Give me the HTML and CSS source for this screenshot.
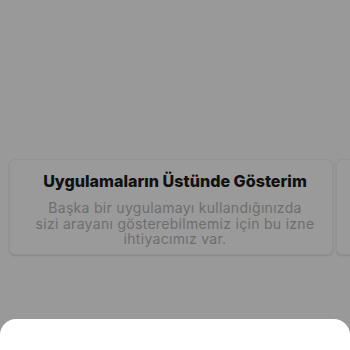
FILE: index.html
```html
<!DOCTYPE html>
<html>
<head>
<meta charset="utf-8">
<link rel="stylesheet" href="styles.css">
</head>
<body>
<div class="screen">
  <div class="carousel">
    <div class="card">
      <div class="title">Uygulamaların Üstünde Gösterim</div>
      <div class="desc">Başka bir uygulamayı kullandığınızda<br>sizi arayanı gösterebilmemiz için bu izne ihtiyacımız var.</div>
    </div>
    <div class="card next"></div>
  </div>
  <div class="sheet"></div>
</div>
</body>
</html>
```
FILE: styles.css
```css
html, body {
  margin: 0;
  padding: 0;
  background: #999999;
}
.screen {
  width: 350px;
  height: 350px;
  overflow: hidden;
  display: flex;
  flex-direction: column;
}
.carousel {
  display: flex;
  gap: 3px;
  padding: 159px 0 0 9px;
  height: 96px;
}
.card {
  flex: 0 0 324px;
  box-sizing: border-box;
  height: 96px;
  border-radius: 6px;
  border: 1px solid #939393;
  box-shadow: 0 1px 2px rgba(0,0,0,0.12);
  background: #9a9a9a;
  display: flex;
  flex-direction: column;
  align-items: center;
  padding: 10px 0 0 8px;
  font-family: "Inter", sans-serif;
}
.title {
  font-weight: 800;
  font-size: 16.1px;
  color: #111111;
  line-height: 22px;
}
.desc {
  margin-top: 8px;
  width: 290px;
  text-align: center;
  font-size: 14px;
  letter-spacing: 0.3px;
  line-height: 15.5px;
  color: #6e6e6e;
}
.sheet {
  margin-top: 64px;
  flex: 1;
  background: #ffffff;
  border-radius: 16px 16px 0 0;
}
```
